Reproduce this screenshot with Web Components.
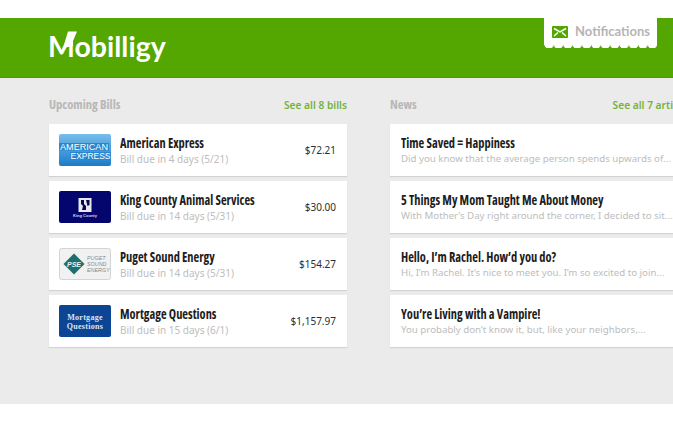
<!DOCTYPE html>
<html lang="en">
<head>
<meta charset="utf-8">
<title>Mobilligy</title>
<style>
  html, body { margin: 0; background: #fff; }
  body { padding-top: 18px; height: 415px; overflow: hidden; font-family: "Noto Sans", sans-serif; }
</style>
</head>
<body>
<app-header></app-header>
<app-main>
  <list-section title="Upcoming Bills" link="See all 8 bills">
    <bill-row name="American Express" due="Bill due in 4 days (5/21)" amount="$72.21">
      <svg slot="logo" width="52" height="32" viewBox="0 0 52 32">
        <defs><linearGradient id="ax" x1="0" y1="0" x2="0" y2="1"><stop offset="0" stop-color="#76bdec"/><stop offset="1" stop-color="#1c7cc8"/></linearGradient></defs>
        <rect width="52" height="32" rx="2" fill="url(#ax)"/>
        <rect x="0" y="9" width="50" height="7.500" fill="#2a86cf"/>
        <rect x="11" y="18" width="41" height="8" fill="#2a86cf"/>
        <text x="25" y="15.500" text-anchor="middle" font-family="Liberation Sans" font-size="8.600" textLength="48" lengthAdjust="spacingAndGlyphs" fill="#fff">AMERICAN</text>
        <text x="31.500" y="25.200" text-anchor="middle" font-family="Liberation Sans" font-size="8.600" textLength="40" lengthAdjust="spacingAndGlyphs" fill="#fff">EXPRESS</text>
      </svg>
    </bill-row>
    <bill-row name="King County Animal Services" due="Bill due in 14 days (5/31)" amount="$30.00">
      <svg slot="logo" width="52" height="32" viewBox="0 0 52 32">
        <rect width="52" height="32" rx="2" fill="#05056e"/>
        <rect x="19.500" y="7" width="13" height="14" fill="#e8e8f0"/>
        <path d="M22 9h3v4l2 2v4h-4l1-4-2-2zM27 9h3.500v5l-2 1z" fill="#07074a"/>
        <text x="26" y="25.500" text-anchor="middle" font-family="Liberation Sans" font-weight="700" font-size="4" fill="#d8d8ee">King County</text>
      </svg>
    </bill-row>
    <bill-row name="Puget Sound Energy" due="Bill due in 14 days (5/31)" amount="$154.27">
      <svg slot="logo" width="52" height="32" viewBox="0 0 52 32">
        <rect x=".5" y=".5" width="51" height="31" rx="2" fill="#f1f1f1" stroke="#d4d4d4"/>
        <path d="M15 5.500 25.500 16 15 26.500 4.500 16z" fill="#1e6f70"/>
        <text x="15" y="18.500" text-anchor="middle" font-family="Liberation Sans" font-style="italic" font-weight="700" font-size="7" fill="#e8f2f2">PSE</text>
        <g font-family="Liberation Sans" font-style="italic" font-size="5.400" fill="#8b8b8b">
          <text x="28" y="11.500">PUGET</text><text x="28" y="17.500">SOUND</text><text x="28" y="23.500">ENERGY</text>
        </g>
      </svg>
    </bill-row>
    <bill-row name="Mortgage Questions" due="Bill due in 15 days (6/1)" amount="$1,157.97">
      <svg slot="logo" width="52" height="32" viewBox="0 0 52 32">
        <rect width="52" height="32" rx="2" fill="#0d4595"/>
        <g font-family="Liberation Serif" font-weight="700" font-size="8" letter-spacing=".3" fill="#d9e4f2" text-anchor="middle">
          <text x="26" y="14.500">Mortgage</text><text x="26" y="23.500">Questions</text>
        </g>
      </svg>
    </bill-row>
  </list-section>
  <list-section title="News" link="See all 7 articles" wide>
    <news-row name="Time Saved = Happiness" text="Did you know that the average person spends upwards of..."></news-row>
    <news-row name="5 Things My Mom Taught Me About Money" text="With Mother’s Day right around the corner, I decided to sit..."></news-row>
    <news-row name="Hello, I’m Rachel. How’d you do?" text="Hi, I’m Rachel. It’s nice to meet you. I’m so excited to join..."></news-row>
    <news-row name="You’re Living with a Vampire!" text="You probably don’t know it, but, like your neighbors,..."></news-row>
  </list-section>
</app-main>

<script>
// shared text looks for the rows
const rowCss = `
  .name { font: 700 14px/18px "Open Sans", sans-serif; font-stretch: 75%; color: #1c1c1c; white-space: nowrap; transform: scaleX(.885); transform-origin: 0 50%; }
  .sub { font: 400 10px/14px "Noto Sans", sans-serif; color: #bdbdbd; white-space: nowrap; }
`;

class AppHeader extends HTMLElement {
  constructor() {
    super();
    this.attachShadow({ mode: 'open' }).innerHTML = `
      <style>
        :host { display: flex; justify-content: space-between; align-items: flex-start; height: 59px; padding: 0 16px 0 49px; background: #53a700; border-bottom: 1px solid #4c9a05; }
        .logo { position: relative; margin: 10px 0 0 -1px; font: 700 28.500px/36px Lato, sans-serif; color: #fff; }
        .logo svg { position: absolute; left: 11px; top: 2px; }
      </style>
      <div class="logo">Mobilligy<svg width="20" height="22" viewBox="0 0 20 22"><path d="M13 6h7v6h-7z" fill="#53a700"/><path d="M9 1.500h9L14 11v5L4 18l1.500-5z" fill="#fff"/></svg></div>
      <notify-tab></notify-tab>`;
  }
}

class NotifyTab extends HTMLElement {
  constructor() {
    super();
    this.attachShadow({ mode: 'open' }).innerHTML = `
      <style>
        :host { display: block; width: 113px; }
        .box { display: flex; align-items: center; gap: 7px; height: 27px; padding-left: 8px; background: #fff; font: 700 13px/1 Lato, sans-serif; color: #b5b5b5; white-space: nowrap; }
        .edge { height: 3px; background: radial-gradient(circle at 5px -1px, #fff 4.500px, transparent 5px) 0 0 / 9.400px 3px repeat-x; }
      </style>
      <div class="box">
        <svg width="16" height="12" viewBox="0 0 16 12"><rect width="16" height="12" rx="1" fill="#53a700"/><path d="M2 2.500 8 6l6-3.500M2 10 6 6.500M14 10 10 6.500" fill="none" stroke="#fff" stroke-width="1.500"/></svg>
        <span>Notifications</span>
      </div>
      <div class="edge"></div>`;
  }
}

class AppMain extends HTMLElement {
  constructor() {
    super();
    this.attachShadow({ mode: 'open' }).innerHTML = `
      <style>
        :host { display: grid; grid-template-columns: 298px 298px; column-gap: 43px; height: 326px; box-sizing: border-box; padding: 18px 0 0 49px; background: #ebebeb; overflow: hidden; }
      </style>
      <slot></slot>`;
  }
}

class ListSection extends HTMLElement {
  constructor() {
    super();
    const wide = this.hasAttribute('wide');
    this.attachShadow({ mode: 'open' }).innerHTML = `
      <style>
        :host { display: block; }
        .head { display: flex; justify-content: space-between; align-items: center; height: 18px; margin-bottom: 10px; }
        h2 { margin: 0; font: 700 12.500px/18px "Open Sans", sans-serif; font-stretch: 75%; color: #b7b7b7; }
        a { font: 600 10.200px/18px "Noto Sans", sans-serif; color: #74b33b; text-decoration: none; white-space: nowrap; ${wide ? 'margin-right: -4px;' : ''} }
        .rows { display: grid; row-gap: 5px; }
      </style>
      <div class="head"><h2>${this.getAttribute('title')}</h2><a>${this.getAttribute('link')}</a></div>
      <div class="rows"><slot></slot></div>`;
  }
}

class BillRow extends HTMLElement {
  constructor() {
    super();
    this.attachShadow({ mode: 'open' }).innerHTML = `
      <style>
        :host { display: flex; align-items: center; box-sizing: border-box; height: 52px; padding: 0 11px 0 10px; background: #fff; box-shadow: 0 1px 1px #d2d2d2; }
        ::slotted(svg) { flex: none; display: block; margin-right: 9px; }
        .txt { flex: 1; margin-top: -1px; }
        .amt { font: 400 10px/14px "Noto Sans", sans-serif; color: #2e2e2e; }
        ${rowCss}
      </style>
      <slot name="logo"></slot>
      <div class="txt"><div class="name">${this.getAttribute('name')}</div><div class="sub">${this.getAttribute('due')}</div></div>
      <div class="amt">${this.getAttribute('amount')}</div>`;
  }
}

class NewsRow extends HTMLElement {
  constructor() {
    super();
    this.attachShadow({ mode: 'open' }).innerHTML = `
      <style>
        :host { display: flex; flex-direction: column; justify-content: center; height: 52px; padding: 0 0 0 11px; background: #fff; box-shadow: 0 1px 1px #d2d2d2; }
        ${rowCss}
        .sub { font-size: 9.700px; }
      </style>
      <div class="name">${this.getAttribute('name')}</div>
      <div class="sub">${this.getAttribute('text')}</div>`;
  }
}

customElements.define('notify-tab', NotifyTab);
customElements.define('app-header', AppHeader);
customElements.define('app-main', AppMain);
customElements.define('list-section', ListSection);
customElements.define('bill-row', BillRow);
customElements.define('news-row', NewsRow);
</script>
</body>
</html>
